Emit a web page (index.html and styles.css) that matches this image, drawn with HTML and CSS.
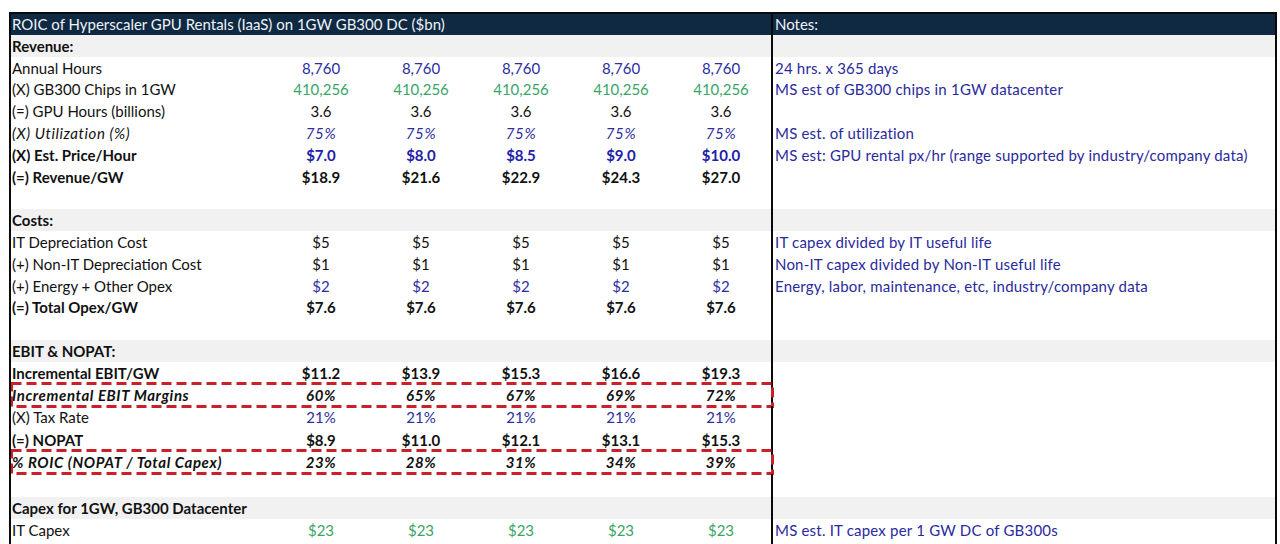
FILE: index.html
```html
<!DOCTYPE html>
<html>
<head>
<meta charset="utf-8">
<link rel="stylesheet" href="styles.css">
</head>
<body>
<div class="sheet">
  <div class="row head">
    <div class="label">ROIC of Hyperscaler GPU Rentals (IaaS) on 1GW GB300 DC ($bn)</div>
    <div class="v"></div><div class="v"></div><div class="v"></div><div class="v"></div><div class="v"></div>
    <div class="note">Notes:</div>
  </div>

  <div class="row band b">
    <div class="label">Revenue:</div>
    <div class="v"></div><div class="v"></div><div class="v"></div><div class="v"></div><div class="v"></div>
    <div class="note"></div>
  </div>
  <div class="row">
    <div class="label">Annual Hours</div>
    <div class="v blue">8,760</div><div class="v blue">8,760</div><div class="v blue">8,760</div><div class="v blue">8,760</div><div class="v blue">8,760</div>
    <div class="note">24 hrs. x 365 days</div>
  </div>
  <div class="row h21">
    <div class="label">(X) GB300 Chips in 1GW</div>
    <div class="v green">410,256</div><div class="v green">410,256</div><div class="v green">410,256</div><div class="v green">410,256</div><div class="v green">410,256</div>
    <div class="note">MS est of GB300 chips in 1GW datacenter</div>
  </div>
  <div class="row">
    <div class="label">(=) GPU Hours (billions)</div>
    <div class="v">3.6</div><div class="v">3.6</div><div class="v">3.6</div><div class="v">3.6</div><div class="v">3.6</div>
    <div class="note"></div>
  </div>
  <div class="row i">
    <div class="label">(X) Utilization (%)</div>
    <div class="v blue">75%</div><div class="v blue">75%</div><div class="v blue">75%</div><div class="v blue">75%</div><div class="v blue">75%</div>
    <div class="note">MS est. of utilization</div>
  </div>
  <div class="row b">
    <div class="label">(X) Est. Price/Hour</div>
    <div class="v dblue">$7.0</div><div class="v dblue">$8.0</div><div class="v dblue">$8.5</div><div class="v dblue">$9.0</div><div class="v dblue">$10.0</div>
    <div class="note">MS est: GPU rental px/hr (range supported by industry/company data)</div>
  </div>
  <div class="row b">
    <div class="label">(=) Revenue/GW</div>
    <div class="v">$18.9</div><div class="v">$21.6</div><div class="v">$22.9</div><div class="v">$24.3</div><div class="v">$27.0</div>
    <div class="note"></div>
  </div>
  <div class="row h21">
    <div class="label"></div>
    <div class="v"></div><div class="v"></div><div class="v"></div><div class="v"></div><div class="v"></div>
    <div class="note"></div>
  </div>

  <div class="row band b">
    <div class="label">Costs:</div>
    <div class="v"></div><div class="v"></div><div class="v"></div><div class="v"></div><div class="v"></div>
    <div class="note"></div>
  </div>
  <div class="row">
    <div class="label">IT Depreciation Cost</div>
    <div class="v">$5</div><div class="v">$5</div><div class="v">$5</div><div class="v">$5</div><div class="v">$5</div>
    <div class="note">IT capex divided by IT useful life</div>
  </div>
  <div class="row">
    <div class="label">(+) Non-IT Depreciation Cost</div>
    <div class="v">$1</div><div class="v">$1</div><div class="v">$1</div><div class="v">$1</div><div class="v">$1</div>
    <div class="note">Non-IT capex divided by Non-IT useful life</div>
  </div>
  <div class="row">
    <div class="label">(+) Energy + Other Opex</div>
    <div class="v blue">$2</div><div class="v blue">$2</div><div class="v blue">$2</div><div class="v blue">$2</div><div class="v blue">$2</div>
    <div class="note">Energy, labor, maintenance, etc, industry/company data</div>
  </div>
  <div class="row b h21">
    <div class="label">(=) Total Opex/GW</div>
    <div class="v">$7.6</div><div class="v">$7.6</div><div class="v">$7.6</div><div class="v">$7.6</div><div class="v">$7.6</div>
    <div class="note"></div>
  </div>
  <div class="row">
    <div class="label"></div>
    <div class="v"></div><div class="v"></div><div class="v"></div><div class="v"></div><div class="v"></div>
    <div class="note"></div>
  </div>

  <div class="row band b">
    <div class="label">EBIT &amp; NOPAT:</div>
    <div class="v"></div><div class="v"></div><div class="v"></div><div class="v"></div><div class="v"></div>
    <div class="note"></div>
  </div>
  <div class="row b">
    <div class="label">Incremental EBIT/GW</div>
    <div class="v">$11.2</div><div class="v">$13.9</div><div class="v">$15.3</div><div class="v">$16.6</div><div class="v">$19.3</div>
    <div class="note"></div>
  </div>
  <div class="row b i">
    <div class="label">Incremental EBIT Margins</div>
    <div class="v">60%</div><div class="v">65%</div><div class="v">67%</div><div class="v">69%</div><div class="v">72%</div>
    <div class="note"></div>
    <svg class="dash" width="764" height="26" viewBox="0 0 764 26"><rect x="1.5" y="1.5" width="761" height="23" fill="none" stroke="#c9202a" stroke-width="3" stroke-dasharray="10 5"/></svg>
  </div>
  <div class="row h23">
    <div class="label">(X) Tax Rate</div>
    <div class="v blue">21%</div><div class="v blue">21%</div><div class="v blue">21%</div><div class="v blue">21%</div><div class="v blue">21%</div>
    <div class="note"></div>
  </div>
  <div class="row b">
    <div class="label">(=) NOPAT</div>
    <div class="v">$8.9</div><div class="v">$11.0</div><div class="v">$12.1</div><div class="v">$13.1</div><div class="v">$15.3</div>
    <div class="note"></div>
  </div>
  <div class="row b i h23">
    <div class="label">% ROIC (NOPAT / Total Capex)</div>
    <div class="v">23%</div><div class="v">28%</div><div class="v">31%</div><div class="v">34%</div><div class="v">39%</div>
    <div class="note"></div>
    <svg class="dash" width="764" height="26" viewBox="0 0 764 26"><rect x="1.5" y="1.5" width="761" height="23" fill="none" stroke="#c9202a" stroke-width="3" stroke-dasharray="10 5"/></svg>
  </div>
  <div class="row h23">
    <div class="label"></div>
    <div class="v"></div><div class="v"></div><div class="v"></div><div class="v"></div><div class="v"></div>
    <div class="note"></div>
  </div>

  <div class="row band b">
    <div class="label">Capex for 1GW, GB300 Datacenter</div>
    <div class="v"></div><div class="v"></div><div class="v"></div><div class="v"></div><div class="v"></div>
    <div class="note"></div>
  </div>
  <div class="row">
    <div class="label">IT Capex</div>
    <div class="v green">$23</div><div class="v green">$23</div><div class="v green">$23</div><div class="v green">$23</div><div class="v green">$23</div>
    <div class="note">MS est. IT capex per 1 GW DC of GB300s</div>
  </div>
  <div class="row">
    <div class="label"></div>
    <div class="v"></div><div class="v"></div><div class="v"></div><div class="v"></div><div class="v"></div>
    <div class="note"></div>
  </div>
</div>
</body>
</html>
```

FILE: styles.css
```css
html, body {
  margin: 0;
  padding: 0;
  background: #ffffff;
  overflow: hidden;
}

body {
  font-family: Lato, "Open Sans", "Liberation Sans", sans-serif;
  font-size: 15px;
  color: #111111;
}

.sheet {
  margin: 12px 0 0 9px;
  width: 1264px;
  height: 532px;
  overflow: hidden;
  border: 2px solid #0a0a0a;
  border-bottom: none;
}

.row {
  position: relative;
  display: grid;
  grid-template-columns: 260px repeat(5, 100px) 1fr;
  height: 22px;
  line-height: 22px;
}

.row.h21 { height: 21px; line-height: 21px; }
.row.h23 { height: 23px; line-height: 23px; }

.label {
  padding-left: 1px;
  white-space: nowrap;
}

.v {
  text-align: center;
  white-space: nowrap;
}

.note {
  border-left: 2px solid #0a0a0a;
  padding-left: 2px;
  color: #2a2a9c;
  font-weight: 400;
  font-style: normal;
  letter-spacing: 0.2px;
  white-space: nowrap;
}

.head {
  background: #0f2942;
  color: #eef2f6;
  height: 21px;
  line-height: 21px;
}

.head .note {
  color: #eef2f6;
  letter-spacing: 0;
}

.band {
  background: #f1f1f2;
}

.b { font-weight: 700; }
.i { font-style: italic; }
.i .label, .i .v { letter-spacing: 0.6px; }

.blue { color: #2e2e9e; }
.dblue { color: #2020a8; }
.green { color: #3aa565; }

.dash {
  position: absolute;
  left: -1px;
  top: -2px;
  pointer-events: none;
}
```
